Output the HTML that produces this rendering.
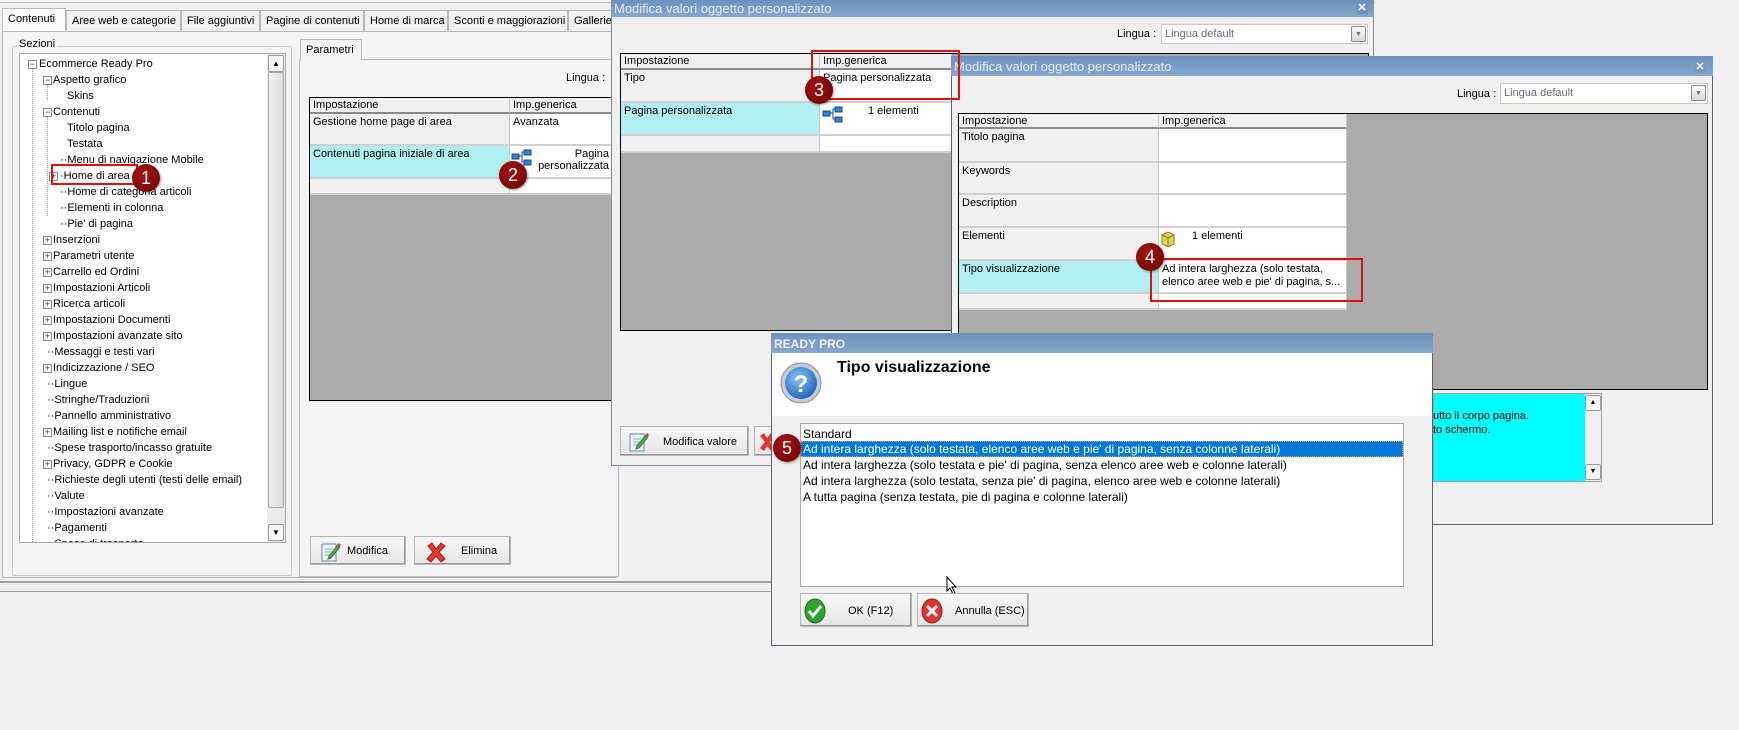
<!DOCTYPE html>
<html><head><meta charset="utf-8">
<style>
*{box-sizing:border-box;margin:0;padding:0}
body{width:1739px;height:730px;background:#f0f0f0;font-family:"Liberation Sans",Arial,sans-serif;font-size:11px;color:#000;position:relative;overflow:hidden}
.a{position:absolute}
.t{position:absolute;white-space:nowrap;line-height:13px}
.tab{position:absolute;top:10px;height:21px;border:1px solid #b8b8b8;border-bottom:none;background:#f0f0f0;padding:4px 0 0 5px;font-size:11px;white-space:nowrap}
.tree .r{position:absolute;height:16px;line-height:16px;white-space:nowrap}
.pm{position:absolute;width:9px;height:9px;border:1px solid #8a8a8a;background:#fff;font-size:9px;line-height:7px;text-align:center;color:#333}
.cell{position:absolute;border-right:1px solid #c8c8c8;border-bottom:2px solid #d0d0d0;padding:2px 3px;line-height:13px}
.title{position:absolute;background:linear-gradient(#6b91bc,#85a7cc);color:#e4ebf3;font-size:13px;padding:2px 3px;white-space:nowrap}
.btn{position:absolute;border:1px solid #b5b5b5;background:linear-gradient(#f7f7f7,#e6e6e6);box-shadow:inset -1px -1px 0 #9a9a9a}
.combo{position:absolute;background:#fff;border:1px solid #c9c9bd;color:#6a6a7a;padding:3px 3px;line-height:13px}
.dd{position:absolute;right:1px;top:1px;width:15px;height:16px;border:1px solid #8a8a8a;border-radius:2px;background:linear-gradient(#fafafa,#d8d8d8);font-size:7px;text-align:center;line-height:15px}
.mk{position:absolute;width:28px;height:28px;border-radius:50%;background:radial-gradient(circle at 40% 35%,#a31515,#6e0000);color:#fff;font-size:18px;text-align:center;line-height:28px;box-shadow:1px 1px 2px rgba(0,0,0,.4)}
.rb{position:absolute;border:2px solid #e01010}
</style></head><body>

<div class="a" style="left:0;top:0;width:1375px;height:3px;border-bottom:1px solid #c0c0c0"></div>
<div class="a" style="left:0;top:581px;width:780px;height:2px;background:#a0a0a0"></div>
<div class="a" style="left:0;top:591px;width:780px;height:1px;background:#a0a0a0"></div>

<div class="tab" style="left:2px;width:64px;top:8px;height:24px;background:#fafafa">Contenuti</div>
<div class="tab" style="left:66px;width:115px">Aree web e categorie</div>
<div class="tab" style="left:181px;width:79px">File aggiuntivi</div>
<div class="tab" style="left:260px;width:104px">Pagine di contenuti</div>
<div class="tab" style="left:364px;width:84px">Home di marca</div>
<div class="tab" style="left:448px;width:120px">Sconti e maggiorazioni</div>
<div class="tab" style="left:568px;width:60px">Gallerie</div>
<div class="a" style="left:2px;top:31px;width:615px;height:547px;border:1px solid #b8b8b8;background:#f4f4f4"></div>

<div class="a" style="left:12px;top:46px;width:280px;height:530px;border:1px solid #c8c8c8;border-radius:3px"></div>
<div class="t" style="left:17px;top:38px;background:#f4f4f4;padding:0 2px">Sezioni</div>
<div class="a tree" style="left:19px;top:53px;width:267px;height:490px;border:1px solid #a8a8a8;background:#fff;overflow:hidden">
 <div class="a" style="left:12px;top:14px;height:480px;border-left:1px dotted #999"></div>
 <div class="a" style="left:27px;top:30px;height:16px;border-left:1px dotted #999"></div>
 <div class="a" style="left:27px;top:62px;height:100px;border-left:1px dotted #999"></div>
 <div class="pm" style="left:8px;top:6px">−</div><div class="r" style="left:17px;top:2px;padding-left:2px">Ecommerce Ready Pro</div>
 <div class="pm" style="left:23px;top:22px">−</div><div class="r" style="left:33px;top:18px">Aspetto grafico</div>
 <div class="r" style="left:47px;top:34px">Skins</div>
 <div class="pm" style="left:23px;top:54px">−</div><div class="r" style="left:33px;top:50px">Contenuti</div>
 <div class="r" style="left:47px;top:66px">Titolo pagina</div>
 <div class="r" style="left:47px;top:82px">Testata</div>
 <div class="r" style="left:40px;top:98px">··Menu di navigazione Mobile</div>
 <div class="pm" style="left:29px;top:118px">+</div><div class="r" style="left:40px;top:114px">·Home di area</div>
 <div class="r" style="left:40px;top:130px">··Home di categoria articoli</div>
 <div class="r" style="left:40px;top:146px">··Elementi in colonna</div>
 <div class="r" style="left:40px;top:162px">··Pie' di pagina</div>
 <div class="pm" style="left:23px;top:182px">+</div><div class="r" style="left:33px;top:178px">Inserzioni</div>
 <div class="pm" style="left:23px;top:198px">+</div><div class="r" style="left:33px;top:194px">Parametri utente</div>
 <div class="pm" style="left:23px;top:214px">+</div><div class="r" style="left:33px;top:210px">Carrello ed Ordini</div>
 <div class="pm" style="left:23px;top:230px">+</div><div class="r" style="left:33px;top:226px">Impostazioni Articoli</div>
 <div class="pm" style="left:23px;top:246px">+</div><div class="r" style="left:33px;top:242px">Ricerca articoli</div>
 <div class="pm" style="left:23px;top:262px">+</div><div class="r" style="left:33px;top:258px">Impostazioni Documenti</div>
 <div class="pm" style="left:23px;top:278px">+</div><div class="r" style="left:33px;top:274px">Impostazioni avanzate sito</div>
 <div class="r" style="left:27px;top:290px">··Messaggi e testi vari</div>
 <div class="pm" style="left:23px;top:310px">+</div><div class="r" style="left:33px;top:306px">Indicizzazione / SEO</div>
 <div class="r" style="left:27px;top:322px">··Lingue</div>
 <div class="r" style="left:27px;top:338px">··Stringhe/Traduzioni</div>
 <div class="r" style="left:27px;top:354px">··Pannello amministrativo</div>
 <div class="pm" style="left:23px;top:374px">+</div><div class="r" style="left:33px;top:370px">Mailing list e notifiche email</div>
 <div class="r" style="left:27px;top:386px">··Spese trasporto/incasso gratuite</div>
 <div class="pm" style="left:23px;top:406px">+</div><div class="r" style="left:33px;top:402px">Privacy, GDPR e Cookie</div>
 <div class="r" style="left:27px;top:418px">··Richieste degli utenti (testi delle email)</div>
 <div class="r" style="left:27px;top:434px">··Valute</div>
 <div class="r" style="left:27px;top:450px">··Impostazioni avanzate</div>
 <div class="r" style="left:27px;top:466px">··Pagamenti</div>
 <div class="r" style="left:27px;top:482px">··Spese di trasporto</div>
 <div class="a" style="left:247px;top:0;width:18px;height:488px;background:#eaeaea"></div>
 <div class="a" style="left:248px;top:1px;width:16px;height:17px;border:1px solid #999;border-radius:2px;background:#f4f4f4;font-size:8px;text-align:center;line-height:15px">▲</div>
 <div class="a" style="left:248px;top:18px;width:16px;height:436px;border:1px solid #aaa;border-radius:2px;background:linear-gradient(90deg,#f0f0f0,#dcdcdc)"></div>
 <div class="a" style="left:248px;top:470px;width:16px;height:17px;border:1px solid #999;border-radius:2px;background:#f4f4f4;font-size:8px;text-align:center;line-height:15px">▼</div>
</div>

<div class="a" style="left:299px;top:59px;width:320px;height:518px;border:1px solid #b8b8b8;background:#f4f4f4"></div>
<div class="tab" style="left:300px;top:39px;width:62px;height:21px;background:#f4f4f4">Parametri</div>
<div class="t" style="left:566px;top:72px">Lingua :</div>
<div class="a" style="left:309px;top:97px;width:304px;height:304px;border:1px solid #000;background:#ababab;overflow:hidden">
 <div class="cell" style="left:0;top:0;width:200px;height:16px;background:#f0f0f0;border-bottom:2px solid #888;padding-top:1px">Impostazione</div>
 <div class="cell" style="left:200px;top:0;width:104px;height:16px;background:#f0f0f0;border-bottom:2px solid #888;padding-top:1px">Imp.generica</div>
 <div class="cell" style="left:0;top:16px;width:200px;height:32px;background:#f0f0f0">Gestione home page di area</div>
 <div class="cell" style="left:200px;top:16px;width:104px;height:32px;background:#fff">Avanzata</div>
 <div class="cell" style="left:0;top:48px;width:200px;height:33px;background:#b0eef0">Contenuti pagina iniziale di area</div>
 <div class="cell" style="left:200px;top:48px;width:104px;height:33px;background:#fff;text-align:right;padding-right:4px;line-height:12px">Pagina<br>personalizzata</div>
 <div class="cell" style="left:0;top:81px;width:200px;height:16px;background:#f0f0f0"></div>
 <div class="cell" style="left:200px;top:81px;width:104px;height:16px;background:#fff"></div>
 <svg class="a" style="left:201px;top:51px" width="22" height="18"><rect x="1" y="5" width="7" height="5" fill="#3a7fd0" stroke="#124a99"/><rect x="13" y="1" width="7" height="5" fill="#3a7fd0" stroke="#124a99"/><rect x="13" y="11" width="7" height="5" fill="#3a7fd0" stroke="#124a99"/><path d="M8 7H11V3H13M11 7V13H13" stroke="#124a99" fill="none"/></svg>
</div>
<div class="btn" style="left:310px;top:536px;width:96px;height:29px"><div class="t" style="left:36px;top:8px">Modifica</div>
 <svg class="a" style="left:10px;top:4px" width="20" height="21"><rect x="1" y="3" width="14" height="17" fill="#eef4fb" stroke="#6a85a8"/><path d="M4 8h8M4 11h8M4 14h6" stroke="#9ab"/><path d="M8 15l9-11 2 2-9 11-3 1z" fill="#4caf50" stroke="#2e7d32"/><path d="M16 4l2-2 2 2-2 2z" fill="#e53935"/></svg></div>
<div class="btn" style="left:414px;top:536px;width:97px;height:29px"><div class="t" style="left:46px;top:8px">Elimina</div>
 <svg class="a" style="left:10px;top:4px" width="22" height="22"><path d="M3 5l4-3 4 6 5-6 4 3-6 6 6 7-4 3-5-6-5 6-4-3 6-7z" fill="#e8342c" stroke="#a51d16"/></svg></div>

<div class="a" style="left:611px;top:0;width:763px;height:466px;background:#f0f0f0;border:1px solid #7e8a98"></div>
<div class="title" style="left:611px;top:0;width:763px;height:17px;padding-top:1px">Modifica valori oggetto personalizzato</div>
<div class="a" style="left:1356px;top:2px;width:12px;height:12px;color:#fff;font-weight:bold;font-size:11px;line-height:12px;text-align:center;background:#6f93bd">✕</div>
<div class="t" style="left:1117px;top:28px">Lingua :</div>
<div class="combo" style="left:1161px;top:24px;width:207px;height:20px">Lingua default<div class="dd">▼</div></div>
<div class="a" style="left:620px;top:53px;width:749px;height:278px;border:1px solid #000;background:#ababab;overflow:hidden">
 <div class="cell" style="left:0;top:0;width:199px;height:16px;background:#f0f0f0;border-bottom:2px solid #888;padding-top:1px">Impostazione</div>
 <div class="cell" style="left:199px;top:0;width:132px;height:16px;background:#f0f0f0;border-bottom:2px solid #888;padding-top:1px">Imp.generica</div>
 <div class="cell" style="left:0;top:16px;width:199px;height:33px;background:#f0f0f0">Tipo</div>
 <div class="cell" style="left:199px;top:16px;width:132px;height:33px;background:#fff">Pagina personalizzata</div>
 <div class="cell" style="left:0;top:49px;width:199px;height:33px;background:#b0eef0">Pagina personalizzata</div>
 <div class="cell" style="left:199px;top:49px;width:132px;height:33px;background:#fff;padding-left:48px">1 elementi</div>
 <div class="cell" style="left:0;top:82px;width:199px;height:17px;background:#f0f0f0"></div>
 <div class="cell" style="left:199px;top:82px;width:132px;height:17px;background:#fff"></div>
 <svg class="a" style="left:201px;top:52px" width="22" height="18"><rect x="1" y="5" width="7" height="5" fill="#3a7fd0" stroke="#124a99"/><rect x="13" y="1" width="7" height="5" fill="#3a7fd0" stroke="#124a99"/><rect x="13" y="11" width="7" height="5" fill="#3a7fd0" stroke="#124a99"/><path d="M8 7H11V3H13M11 7V13H13" stroke="#124a99" fill="none"/></svg>
</div>
<div class="btn" style="left:620px;top:426px;width:129px;height:30px"><div class="t" style="left:42px;top:9px">Modifica valore</div>
 <svg class="a" style="left:8px;top:4px" width="20" height="21"><rect x="1" y="3" width="14" height="17" fill="#eef4fb" stroke="#6a85a8"/><path d="M4 8h8M4 11h8M4 14h6" stroke="#9ab"/><path d="M8 15l9-11 2 2-9 11-3 1z" fill="#4caf50" stroke="#2e7d32"/><path d="M16 4l2-2 2 2-2 2z" fill="#e53935"/></svg></div>
<div class="btn" style="left:754px;top:426px;width:30px;height:30px"><svg class="a" style="left:3px;top:5px" width="18" height="20"><path d="M2 4l4-3 3 5 4-5 4 3-5 6 5 6-4 3-4-5-3 5-4-3 5-6z" fill="#e8342c"/></svg></div>

<div class="a" style="left:951px;top:56px;width:762px;height:469px;background:#f0f0f0;border:1px solid #59636e"></div>
<div class="title" style="left:951px;top:56px;width:762px;height:20px;padding-top:3px">Modifica valori oggetto personalizzato</div>
<div class="a" style="left:1694px;top:61px;width:12px;height:12px;color:#fff;font-weight:bold;font-size:11px;line-height:12px;text-align:center;background:#7599c2">✕</div>
<div class="t" style="left:1457px;top:88px">Lingua :</div>
<div class="combo" style="left:1500px;top:83px;width:208px;height:21px">Lingua default<div class="dd">▼</div></div>
<div class="a" style="left:958px;top:113px;width:750px;height:277px;border:1px solid #000;background:#ababab;overflow:hidden">
 <div class="cell" style="left:0;top:0;width:200px;height:15px;background:#f0f0f0;border-bottom:2px solid #888;padding-top:1px">Impostazione</div>
 <div class="cell" style="left:200px;top:0;width:188px;height:15px;background:#f0f0f0;border-bottom:2px solid #888;padding-top:1px">Imp.generica</div>
 <div class="cell" style="left:0;top:15px;width:200px;height:34px;background:#f0f0f0">Titolo pagina</div>
 <div class="cell" style="left:200px;top:15px;width:188px;height:34px;background:#fff"></div>
 <div class="cell" style="left:0;top:49px;width:200px;height:32px;background:#f0f0f0">Keywords</div>
 <div class="cell" style="left:200px;top:49px;width:188px;height:32px;background:#fff"></div>
 <div class="cell" style="left:0;top:81px;width:200px;height:33px;background:#f0f0f0">Description</div>
 <div class="cell" style="left:200px;top:81px;width:188px;height:33px;background:#fff"></div>
 <div class="cell" style="left:0;top:114px;width:200px;height:33px;background:#f0f0f0">Elementi</div>
 <div class="cell" style="left:200px;top:114px;width:188px;height:33px;background:#fff;padding-left:33px">1 elementi</div>
 <div class="cell" style="left:0;top:147px;width:200px;height:33px;background:#b0eef0">Tipo visualizzazione</div>
 <div class="cell" style="left:200px;top:147px;width:188px;height:33px;background:#fff;line-height:13px">Ad intera larghezza (solo testata,<br>elenco aree web e pie' di pagina, s...</div>
 <div class="cell" style="left:0;top:180px;width:200px;height:16px;background:#f0f0f0"></div>
 <div class="cell" style="left:200px;top:180px;width:188px;height:16px;background:#fff"></div>
 <svg class="a" style="left:201px;top:116px" width="16" height="18"><path d="M2 5l6-3 6 3v9l-6 3-6-3z" fill="#e8d44a" stroke="#8a7a1a"/><path d="M2 5l6 3 6-3M8 8v9" stroke="#5a8a2a" fill="none"/></svg>
</div>
<div class="a" style="left:1433px;top:393px;width:169px;height:89px;background:#00ffff;border:1px solid #a0a0a0"></div>
<div class="t" style="left:1433px;top:410px;width:150px;overflow:hidden">utto il corpo pagina.</div>
<div class="t" style="left:1433px;top:424px;width:150px;overflow:hidden">to schermo.</div>
<div class="a" style="left:1585px;top:394px;width:16px;height:87px;background:#efefef"></div>
<div class="a" style="left:1585px;top:395px;width:16px;height:16px;border:1px solid #999;border-radius:2px;background:#f6f6f6;font-size:7px;text-align:center;line-height:14px">▲</div>
<div class="a" style="left:1585px;top:464px;width:16px;height:16px;border:1px solid #999;border-radius:2px;background:#f6f6f6;font-size:7px;text-align:center;line-height:14px">▼</div>

<div class="a" style="left:771px;top:333px;width:662px;height:313px;background:#f0f0f0;border:1px solid #59636e"></div>
<div class="title" style="left:771px;top:333px;width:662px;height:20px;font-weight:bold;color:#eef2f7;font-size:12px;padding-top:4px">READY PRO</div>
<div class="a" style="left:772px;top:353px;width:660px;height:63px;background:#fff"></div>
<svg class="a" style="left:779px;top:361px" width="44" height="44"><defs><radialGradient id="q" cx=".4" cy=".35" r=".7"><stop offset="0" stop-color="#8cc4f4"/><stop offset="1" stop-color="#1c63b8"/></radialGradient></defs><circle cx="22" cy="22" r="20" fill="#c8ccd2" stroke="#8a8f96"/><circle cx="22" cy="22" r="16" fill="url(#q)"/><text x="22" y="31" text-anchor="middle" font-family="Liberation Sans" font-weight="bold" font-size="24" fill="#fff">?</text></svg>
<div class="t" style="left:837px;top:359px;font-size:16px;font-weight:bold;line-height:18px">Tipo visualizzazione</div>
<div class="a" style="left:800px;top:423px;width:604px;height:164px;background:#fff;border:1px solid #a8a8a8"></div>
<div class="t" style="left:803px;top:426px;font-size:12px;line-height:16px">Standard</div>
<div class="a" style="left:801px;top:441px;width:602px;height:16px;background:#0078d7;border:1px dotted #e0a060"></div>
<div class="t" style="left:803px;top:441px;font-size:12px;line-height:16px;color:#fff">Ad intera larghezza (solo testata, elenco aree web e pie' di pagina, senza colonne laterali)</div>
<div class="t" style="left:803px;top:457px;font-size:12px;line-height:16px">Ad intera larghezza (solo testata e pie' di pagina, senza elenco aree web e colonne laterali)</div>
<div class="t" style="left:803px;top:473px;font-size:12px;line-height:16px">Ad intera larghezza (solo testata, senza pie' di pagina, elenco aree web e colonne laterali)</div>
<div class="t" style="left:803px;top:489px;font-size:12px;line-height:16px">A tutta pagina (senza testata, pie di pagina e colonne laterali)</div>
<svg class="a" style="left:946px;top:576px" width="12" height="18"><path d="M1 1v14l3-3 3 6 2-1-3-6h4z" fill="#fff" stroke="#000"/></svg>
<div class="btn" style="left:800px;top:593px;width:112px;height:34px"><div class="t" style="left:47px;top:11px">OK (F12)</div>
 <svg class="a" style="left:3px;top:4px" width="24" height="26"><ellipse cx="11" cy="13" rx="10" ry="12" fill="#2fa52f" stroke="#1a6e1a"/><path d="M5 13l4 5 8-10" stroke="#fff" stroke-width="3" fill="none"/></svg></div>
<div class="btn" style="left:917px;top:593px;width:112px;height:34px"><div class="t" style="left:37px;top:11px">Annulla (ESC)</div>
 <svg class="a" style="left:3px;top:4px" width="24" height="26"><ellipse cx="11" cy="13" rx="10" ry="12" fill="#e0342c" stroke="#9a1a14"/><path d="M6 8l10 10M16 8L6 18" stroke="#fff" stroke-width="3"/></svg></div>

<div class="rb" style="left:51px;top:164px;width:87px;height:21px"></div>
<div class="mk" style="left:132px;top:164px">1</div>
<div class="mk" style="left:499px;top:161px">2</div>
<div class="rb" style="left:811px;top:50px;width:149px;height:50px"></div>
<div class="mk" style="left:805px;top:76px">3</div>
<div class="rb" style="left:1150px;top:258px;width:213px;height:44px"></div>
<div class="mk" style="left:1136px;top:243px">4</div>
<div class="mk" style="left:773px;top:434px">5</div>
</body></html>
